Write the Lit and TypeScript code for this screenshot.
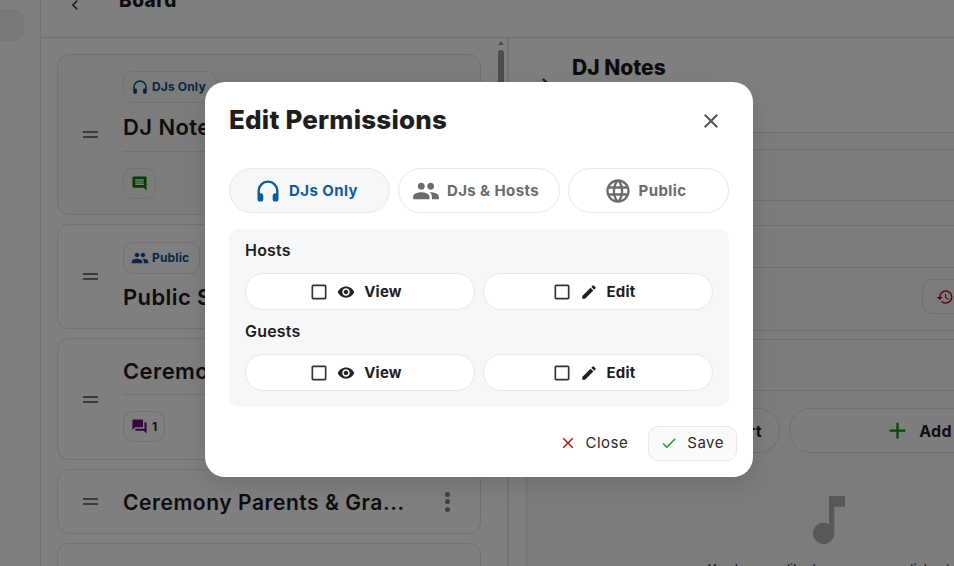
import { LitElement, html, css } from "lit";
import { customElement } from "lit/decorators.js";

const icon = (d: string, size: number, color: string) => html`<svg class="i" width=${size} height=${size} viewBox="0 0 24 24" aria-hidden="true"><path fill=${color} d=${d}></path></svg>`;

const P = {
  headset: "M12 3a9 9 0 0 0-9 9v7c0 1.1.9 2 2 2h1c1.1 0 2-.9 2-2v-3c0-1.100-.9-2-2-2H5v-2a7 7 0 0 1 14 0v2h-1c-1.100 0-2 .9-2 2v3c0 1.100.9 2 2 2h1c1.100 0 2-.9 2-2v-7a9 9 0 0 0-9-9z",
  group: "M16 11c1.660 0 2.990-1.340 2.990-3S17.660 5 16 5s-3 1.340-3 3 1.340 3 3 3zm-8 0c1.660 0 2.990-1.340 2.990-3S9.660 5 8 5 5 6.340 5 8s1.340 3 3 3zm0 2c-2.330 0-7 1.170-7 3.500V19h14v-2.500C15 14.170 10.330 13 8 13zm8 0c-.290 0-.620.020-.970.050 1.160.840 1.970 1.970 1.970 3.450V19h6v-2.500c0-2.330-4.670-3.500-7-3.500z",
  globe: "M11.990 2C6.470 2 2 6.480 2 12s4.470 10 9.990 10C17.520 22 22 17.520 22 12S17.520 2 11.990 2zm6.930 6h-2.950c-.320-1.250-.780-2.450-1.380-3.560 1.840.630 3.370 1.910 4.330 3.560zM12 4.040c.830 1.200 1.480 2.530 1.910 3.960h-3.820c.430-1.430 1.080-2.760 1.910-3.960zM4.260 14C4.100 13.360 4 12.690 4 12s.100-1.360.260-2h3.380c-.080.660-.140 1.320-.140 2s.060 1.340.140 2H4.260zm.820 2h2.950c.320 1.250.780 2.450 1.380 3.560-1.840-.630-3.370-1.900-4.330-3.560zm2.950-8H5.080c.960-1.660 2.490-2.930 4.330-3.560C8.810 5.550 8.350 6.750 8.030 8zM12 19.960c-.830-1.200-1.480-2.530-1.910-3.960h3.820c-.430 1.430-1.080 2.760-1.910 3.960zM14.340 14H9.660c-.090-.660-.160-1.320-.160-2s.070-1.350.160-2h4.680c.090.650.160 1.320.160 2s-.070 1.340-.160 2zm.250 5.560c.600-1.110 1.060-2.310 1.380-3.560h2.950c-.960 1.650-2.490 2.930-4.330 3.560zM16.360 14c.080-.660.140-1.320.140-2s-.060-1.340-.140-2h3.380c.160.640.260 1.310.260 2s-.100 1.360-.260 2h-3.380z",
  close: "M19 6.410 17.590 5 12 10.590 6.410 5 5 6.410 10.590 12 5 17.590 6.410 19 12 13.410 17.590 19 19 17.590 13.410 12z",
  check: "M9 16.170 4.830 12l-1.420 1.410L9 19 21 7l-1.410-1.410z",
  eye: "M12 4.500C7 4.500 2.730 7.610 1 12c1.730 4.390 6 7.500 11 7.500s9.270-3.110 11-7.500c-1.730-4.390-6-7.500-11-7.500zM12 17c-2.760 0-5-2.240-5-5s2.240-5 5-5 5 2.240 5 5-2.240 5-5 5zm0-8c-1.660 0-3 1.340-3 3s1.340 3 3 3 3-1.340 3-3-1.340-3-3-3z",
  edit: "M3 17.250V21h3.750L17.810 9.940l-3.750-3.750L3 17.250zM20.710 7.040a1 1 0 0 0 0-1.410l-2.340-2.340a1 1 0 0 0-1.410 0l-1.830 1.830 3.750 3.750 1.830-1.830z",
  box: "M19 5v14H5V5h14m0-2H5c-1.100 0-2 .9-2 2v14c0 1.100.9 2 2 2h14c1.100 0 2-.9 2-2V5c0-1.100-.9-2-2-2z",
  chat: "M21.990 4c0-1.100-.89-2-1.990-2H4c-1.100 0-2 .9-2 2v12c0 1.100.9 2 2 2h14l4 4-.010-18zM18 14H6v-2h12v2zm0-3H6V9h12v2zm0-3H6V6h12v2z",
  forum: "M21 6h-2v9H6v2c0 .55.45 1 1 1h11l4 4V7c0-.55-.45-1-1-1zm-4 6V3c0-.55-.45-1-1-1H3c-.55 0-1 .45-1 1v14l4-4h10c.55 0 1-.45 1-1z",
  history: "M13 3a9 9 0 0 0-9 9H1l3.890 3.890.070.140L9 12H6c0-3.870 3.130-7 7-7s7 3.130 7 7-3.130 7-7 7c-1.930 0-3.680-.79-4.940-2.060l-1.420 1.420A8.954 8.954 0 0 0 13 21a9 9 0 0 0 0-18zm-1 5v5l4.280 2.540.720-1.210-3.500-2.080V8H12z",
  plus: "M19 13h-6v6h-2v-6H5v-2h6V5h2v6h6v2z",
  note: "M12 3v10.550A4 4 0 1 0 14 17V7h4V3h-6z",
  back: "M15.410 7.410 14 6l-6 6 6 6 1.410-1.410L10.830 12z",
  forward: "M8.590 7.410 10 6l6 6-6 6-1.410-1.410L13.170 12z",
};

@customElement("app-root")
export class AppRoot extends LitElement {
  static styles = css`
    :host { display: block; width: 954px; height: 566px; overflow: hidden; position: relative; font-family: Inter, "Noto Sans", sans-serif; color: #1b1b1f; background: #fff; }
    * { box-sizing: border-box; }
    .i { flex: none; display: block; }
    .page { display: flex; height: 566px; }
    .rail { width: 41px; flex: none; border-right: 1px solid #e6e6e6; padding-top: 9px; }
    .rail-pill { width: 24px; height: 32px; background: #f1f1f1; border-radius: 0 10px 10px 0; }
    .main { flex: 1; min-width: 0; display: flex; flex-direction: column; }
    .top { height: 38px; flex: none; border-bottom: 1px solid #dcdcdc; display: flex; align-items: flex-end; padding: 0 0 25px 24px; gap: 34px; overflow: hidden; }
    .top .i { margin-bottom: -3px; }
    .top b { font-size: 19px; font-weight: 800; line-height: 22px; letter-spacing: .5px; }
    .body { flex: 1; display: flex; min-height: 0; }
    .list { width: 468px; flex: none; position: relative; padding: 16px 26px 0 16px; display: flex; flex-direction: column; gap: 9px; overflow: hidden; border-right: 2px solid #e4e4e4; }
    .card { flex: none; border: 1px solid #e3e3e3; border-radius: 12px; display: flex; align-items: center; padding: 0 30px 0 25px; gap: 25px; }
    .c1 { height: 161px; background: #f8faf7; }
    .c2 { height: 105px; }
    .c3 { height: 122px; }
    .c4 { height: 65px; }
    .c5 { height: 65px; }
    .handle { width: 15px; height: 7px; flex: none; border-top: 2px solid #777; border-bottom: 2px solid #777; }
    .info { flex: 1; min-width: 0; display: flex; flex-direction: column; align-items: flex-start; }
    .chip { display: inline-flex; align-items: center; height: 32px; padding: 0 10px 0 7px; gap: 3px; border: 1px solid #e3e3e3; border-radius: 10px; font-size: 12px; font-weight: 700; color: #0b4c8c; white-space: nowrap; letter-spacing: .15px; }
    .chip.small { height: 31px; padding: 0 7px 0 7px; gap: 4px; color: #222; }
    .mt16 { margin-top: 16px; }
    .title { font-size: 22px; font-weight: 600; line-height: 30px; white-space: nowrap; letter-spacing: .4px; }
    .title.gap { margin: 8px 0 9px; padding-top: 1px; }
    .title.top8 { margin-top: 8px; }
    .title.t4 { font-size: 21px; letter-spacing: .55px; padding-top: 3px; }
    .rule { align-self: stretch; border-top: 1px solid #e3e3e3; }
    .rule.m { margin: 8px 0 16px; }
    .dots { display: flex; flex-direction: column; gap: 2.500px; flex: none; width: 5px; }
    .dots i { width: 5px; height: 5px; border-radius: 50%; background: #808080; }
    .scroll { position: absolute; right: 2px; top: 0; width: 8px; bottom: 0; display: flex; flex-direction: column; align-items: center; }
    .scroll .up { width: 0; height: 0; border: 3.500px solid transparent; border-bottom: 4px solid #999; border-top: 0; margin-top: 3px; }
    .scroll .thumb { width: 6px; height: 34px; background: #999; border-radius: 3px; margin-top: 5px; }
    .detail { flex: 1; min-width: 0; overflow: hidden; padding-left: 17px; }
    .panel { width: 640px; height: 100%; border-left: 1px solid #e4e4e4; background: #f8f8f8; }
    .head { height: 95px; border-bottom: 1px solid #dcdcdc; padding: 17px 0 0 23px; font-size: 21px; font-weight: 800; background: #fff; margin-left: -18px; line-height: 25px; display: flex; gap: 12px; }
    .head .i { margin-top: 16px; }
    .row { border-bottom: 1px solid #dcdcdc; }
    .r1 { height: 17px; } .r2 { height: 51px; } .r3 { height: 25px; } .r4 { height: 42px; }
    .r5 { height: 63px; display: flex; align-items: flex-start; padding: 11px 0 0 395px; }
    .r6 { height: 9px; } .r7 { height: 51px; }
    .hist { width: 64px; height: 35px; border: 1px solid #e0e0e0; border-radius: 10px; flex: none; padding: 8px 0 0 13px; }
    .pills { display: flex; gap: 9px; margin: 17px 0 0 28px; }
    .pill { height: 45px; flex: none; border: 1px solid #e0e0e0; border-radius: 22px; display: flex; align-items: center; justify-content: center; gap: 8px; font-size: 16px; font-weight: 700; background: #fbfbfb; letter-spacing: .3px; }
    .p1 { width: 225px; justify-content: flex-end; padding-right: 17px; }
    .p2 { width: 258px; }
    .empty { display: flex; flex-direction: column; align-items: center; width: 604px; margin-top: 35px; font-size: 13px; color: #333; }
    .empty span { margin-top: 9px; white-space: nowrap; }
    .scrim { position: absolute; inset: 0; background: rgba(0,0,0,.5); }
    .modal { position: absolute; left: 205px; top: 82px; width: 548px; height: 395px; background: #fff; border-radius: 20px; box-shadow: 0 8px 24px rgba(0,0,0,.12); padding: 0 24px; display: flex; flex-direction: column; }
    .mh { display: flex; align-items: center; justify-content: space-between; height: 76px; }
    .mh h2 { margin: -2px 0 0; font-size: 26px; font-weight: 800; color: #1e1e1e; letter-spacing: .2px; }
    .mh .i { margin-right: 6px; margin-top: 1px; }
    .tabs { margin-top: 10px; display: grid; grid-template-columns: 161px 162px 161px; gap: 8px; justify-content: space-between; }
    .tab { height: 45px; border: 1px solid #e8e8e8; border-radius: 23px; display: flex; align-items: center; justify-content: center; gap: 7px; font-size: 15px; font-weight: 700; color: #6b6b6b; background: #fff; letter-spacing: .4px; padding-right: 7px; }
    .tab.on { background: #f5f7f9; color: #0f5a9e; }
    .perm { margin-top: 16px; height: 178px; background: #f6f7f9; border-radius: 10px; padding: 11px 16px 0; display: flex; flex-direction: column; }
    .label { font-size: 16px; font-weight: 600; line-height: 20px; color: #1e1e1e; letter-spacing: .2px; }
    .opts { display: grid; grid-template-columns: 230px 230px; gap: 8px; margin-top: 13px; margin-bottom: 11px; }
    .opt { height: 37px; background: #fff; border: 1px solid #e8e8e8; border-radius: 19px; display: flex; align-items: center; justify-content: center; font-size: 15px; font-weight: 700; color: #1e1e1e; padding-right: 9px; letter-spacing: .2px; }
    .opt .ck { margin-right: 8px; }
    .opt .ic { margin-right: 9px; }
    .foot { display: flex; justify-content: flex-end; align-items: center; margin: 19px -8px 0 0; gap: 20px; }
    .btn { display: flex; align-items: center; gap: 9px; font-size: 15px; color: #2a2a2a; height: 35px; font-weight: 400; letter-spacing: .5px; padding-bottom: 2px; }
    .btn.save { border: 1px solid #e8e8e8; border-radius: 10px; background: #fafafa; padding: 0 12px 2px 11px; }
  `;

  private opts() {
    return html`<div class="opts">
      <div class="opt"><span class="ck">${icon(P.box, 20, "#333")}</span><span class="ic">${icon(P.eye, 18, "#222")}</span>View</div>
      <div class="opt"><span class="ck">${icon(P.box, 20, "#333")}</span><span class="ic">${icon(P.edit, 18, "#222")}</span>Edit</div>
    </div>`;
  }

  render() {
    return html`
      <div class="page">
        <div class="rail"><div class="rail-pill"></div></div>
        <div class="main">
          <div class="top">${icon(P.back, 20, "#444")}<b>Board</b></div>
          <div class="body">
            <div class="list">
              <div class="card c1"><div class="handle"></div><div class="info">
                <div class="chip">${icon(P.headset, 18, "#0b4c8c")}DJs Only</div>
                <div class="title gap">DJ Notes</div>
                <div class="rule"></div>
                <div class="chip small mt16">${icon(P.chat, 17, "#0a7a0a")}</div>
              </div></div>
              <div class="card c2"><div class="handle"></div><div class="info">
                <div class="chip">${icon(P.group, 18, "#0b4c8c")}Public</div>
                <div class="title top8">Public Speaking</div>
              </div></div>
              <div class="card c3"><div class="handle"></div><div class="info">
                <div class="title">Ceremony</div>
                <div class="rule m"></div>
                <div class="chip small">${icon(P.forum, 17, "#6a0a78")}1</div>
              </div></div>
              <div class="card c4"><div class="handle"></div><div class="info">
                <div class="title t4">Ceremony Parents &amp; Gra...</div>
              </div><div class="dots"><i></i><i></i><i></i></div></div>
              <div class="card c5"></div>
              <div class="scroll"><div class="up"></div><div class="thumb"></div></div>
            </div>
            <div class="detail"><div class="panel">
              <div class="head">${icon(P.forward, 28, "#444")}DJ Notes</div>
              <div class="row r1"></div><div class="row r2"></div><div class="row r3"></div><div class="row r4"></div>
              <div class="row r5"><div class="hist">${icon(P.history, 18, "#a80f1e")}</div></div>
              <div class="row r6"></div><div class="row r7"></div>
              <div class="pills">
                <div class="pill p1">Sort</div>
                <div class="pill p2">${icon(P.plus, 27, "#0a8a0a")}Add</div>
              </div>
              <div class="empty">${icon(P.note, 64, "#b0b0b0")}<span>You have no liked songs on your list yet</span></div>
            </div></div>
          </div>
        </div>
      </div>
      <div class="scrim"></div>
      <div class="modal">
        <div class="mh"><h2>Edit Permissions</h2>${icon(P.close, 24, "#555")}</div>
        <div class="tabs">
          <div class="tab on">${icon(P.headset, 28, "#0f5a9e")}DJs Only</div>
          <div class="tab">${icon(P.group, 28, "#6b6b6b")}DJs &amp; Hosts</div>
          <div class="tab">${icon(P.globe, 28, "#6b6b6b")}Public</div>
        </div>
        <div class="perm">
          <div class="label">Hosts</div>
          ${this.opts()}
          <div class="label">Guests</div>
          ${this.opts()}
        </div>
        <div class="foot">
          <div class="btn">${icon(P.close, 18, "#b01818")}Close</div>
          <div class="btn save">${icon(P.check, 18, "#1f9d2a")}Save</div>
        </div>
      </div>
    `;
  }
}
